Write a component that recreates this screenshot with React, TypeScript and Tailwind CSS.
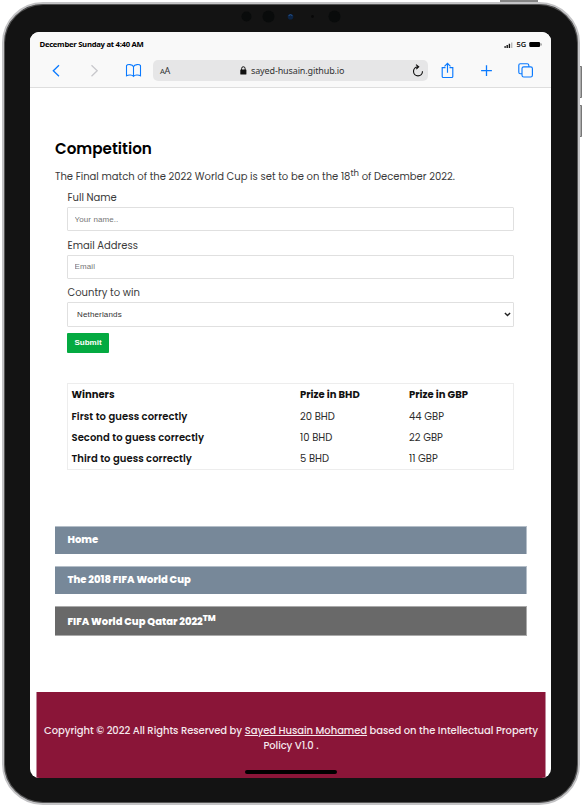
import React from "react";

const poppins = "font-['Poppins','Inter',sans-serif]";
const arial = "font-['Liberation_Sans',Arial,sans-serif]";

function StatusBar() {
  return (
    <div className="flex h-[24px] items-center justify-between pl-[9.5px] pr-[9px] font-['Open_Sans','Noto_Sans',sans-serif] text-black">
      <span className="whitespace-nowrap text-[7.7px] font-bold leading-[24px] tracking-[-0.28px]">December Sunday at 4:40 AM</span>
      <div className="flex h-[24px] items-center">
        <svg width="10" height="6" viewBox="0 0 10 6" className="mt-px">
          <path d="M0.5 4h1.2v2H0.5zM2.5 3h1.4v3H2.5zM4.7 1.8h1.4v4.2H4.7z" fill="#111" />
          <path d="M7 .5h1.4V6H7z" fill="#bbb" />
        </svg>
        <span className="ml-[2px] text-[7.5px] font-semibold leading-[24px] tracking-[-0.1px]">5G</span>
        <svg width="13" height="7" viewBox="0 0 13 7" className="ml-[3px]">
          <rect x="0.3" y="1" width="10.8" height="5" rx="1.2" fill="#000" />
          <path d="M12.1 2.5v2" stroke="#777" />
        </svg>
      </div>
    </div>
  );
}

function Toolbar() {
  return (
    <div className="flex h-[31px] items-start pt-[4px] text-[#0a7aff]">
      <svg width="123" height="21" viewBox="0 0 123 21" fill="none" strokeWidth="1.3">
        <path d="M29 5.3L23.3 10.7L29 16.2" stroke="#0a7aff" />
        <path d="M61.5 5.3L67.2 10.7L61.5 16.2" stroke="#c8c8cc" />
        <path d="M103.5 15.8V6.7C102.5 4.1 97.5 4.1 96.5 5.6V15.8C98.5 14.7 102.4 14.8 103.5 16.3C104.6 14.8 108.5 14.7 110.5 15.8V5.6C109.5 4.1 104.5 4.1 103.5 6.7" stroke="#0a7aff" strokeWidth="1.1" />
      </svg>
      <div className="flex h-[21px] w-[275px] items-center rounded-[5px] bg-[#e6e6e7] pl-[7px] pr-[4px] font-['Noto_Sans',sans-serif] text-[#333]">
        <span className="w-[80px] pt-px text-[9px] leading-[20px] tracking-[-0.2px]"><span className="text-[7.5px]">A</span>A</span>
        <svg width="7" height="9" viewBox="0 0 7 9">
          <rect x=".3" y="3.5" width="6.1" height="5" rx=".6" fill="#111" />
          <path d="M1.6 4V2.5a1.75 1.75 0 0 1 3.5 0V4" stroke="#111" strokeWidth="1" fill="none" />
        </svg>
        <span className="ml-[4px] whitespace-nowrap text-[9px] leading-[20px] tracking-[-0.13px]">sayed-husain.github.io</span>
        <svg width="13" height="14" viewBox="0 0 13 14" fill="none" stroke="#111" strokeWidth="1.15" className="ml-auto">
          <path d="M7 2.8A4.5 4.5 0 1 0 11.5 7.3M5 .6L7.7 2.8L5.3 5.2" />
        </svg>
      </div>
      <svg width="123" height="21" viewBox="0 0 123 21" fill="none" stroke="#0a7aff" strokeWidth="1.15">
        <path d="M17.5 7.6H14.2V16.5Q14.2 17.5 15.2 17.5H23.8Q24.8 17.5 24.8 16.5V7.6H21.5M19.5 12.8V3.6M16.5 6.3L19.5 3.3L22.5 6.3" />
        <path d="M58.5 5.2V16M53.1 10.6H63.9" strokeWidth="1.3" />
        <rect x="94" y="6.8" width="10.4" height="10.2" rx="1.8" />
        <path d="M94 13.7H92.3Q90.8 13.7 90.8 12.2V5.2Q90.8 3.7 92.3 3.7H99.2Q100.8 3.7 100.8 5.2V6.8" />
      </svg>
    </div>
  );
}

const labelStyle = "pl-[0.5px] text-[10px] leading-[20px] text-[#3a3a3a] whitespace-nowrap";
const fieldStyle = "block h-[24px] w-full rounded-[1px] border border-[#e0e0e0] bg-white pl-[6.5px] pr-[6px] text-[8px] tracking-[0.1px] placeholder:text-[#757575]";
const prizes = [
  ["First to guess correctly", "20 BHD", "44 GBP"],
  ["Second to guess correctly", "10 BHD", "22 GBP"],
  ["Third to guess correctly", "5 BHD", "11 GBP"],
];

function CompetitionForm() {
  return (
    <form className="pl-[12px] pr-[13px]" onSubmit={(e) => e.preventDefault()}>
      <label className={`block h-[20px] pt-px ${labelStyle}`}>Full Name</label>
      <input placeholder="Your name.." className={`${arial} ${fieldStyle}`} />
      <label className={`block h-[24px] pt-[5px] ${labelStyle}`}>Email Address</label>
      <input placeholder="Email" className={`${arial} ${fieldStyle} pb-[2px]`} />
      <label className={`block h-[23px] pt-[4px] ${labelStyle}`}>Country to win</label>
      <button type="button" className={`${arial} flex h-[25px] w-full items-center justify-between rounded-[1px] border border-[#e0e0e0] bg-white pl-[9px] pr-[2px] text-[8px] tracking-[0.15px] text-[#333]`}>
        <span>Netherlands</span>
        <svg width="7" height="5" viewBox="0 0 7 5" fill="none" stroke="#222" strokeWidth="1.4"><path d="M.9 1L3.5 3.6L6.1 1" /></svg>
      </button>
      <button className={`${arial} mt-[6px] block h-[20px] w-[42px] rounded-[1px] bg-[#04aa41] text-[8px] font-bold text-white`}>Submit</button>
      <table className="mt-[30px] w-full table-fixed border-collapse border border-[#ededed] text-left text-[10px] leading-[21px] text-[#2c2c2c]">
        <colgroup><col className="w-[229px]" /><col className="w-[109px]" /><col /></colgroup>
        <thead>
          <tr className="h-[22px] font-semibold text-[#111]"><th className="pl-[3.5px]">Winners</th><th className="pl-[3.5px]">Prize in BHD</th><th className="pl-[3.5px]">Prize in GBP</th></tr>
        </thead>
        <tbody>
          {prizes.map(([name, bhd, gbp]) => (
            <tr key={name} className="h-[21px]"><th className="pl-[3.5px] font-semibold tracking-[0.05px] text-[#111]">{name}</th><td className="pl-[3.5px]">{bhd}</td><td className="pl-[3.5px]">{gbp}</td></tr>
          ))}
        </tbody>
      </table>
    </form>
  );
}

export default function App() {
  return (
    <div className="relative h-[806px] w-[582px] overflow-hidden bg-white pl-[2px] pt-[2px]">
      <div className="absolute left-[500px] top-0 h-[3px] w-[38px] bg-[#858585]" />
      <div className="absolute left-[579px] top-[66px] h-[32px] w-[3px] rounded-l-[1px] border border-[#777] bg-[#aaa]" />
      <div className="absolute left-[579px] top-[105px] h-[32px] w-[3px] rounded-l-[1px] border border-[#777] bg-[#aaa]" />
      <div className="relative flex h-[803px] w-[578px] rounded-[41px] border-2 border-[#c3c3c5] bg-[#131313] shadow-[inset_0_0_0_1px_#555]">
        <svg className="absolute left-[230px] top-[5px]" width="120" height="16" viewBox="0 0 120 16">
          <circle cx="12.5" cy="7.5" r="5" fill="#090b0b" /><circle cx="34.5" cy="7.5" r="6" fill="#090b0b" />
          <circle cx="56.5" cy="7.7" r="2.8" fill="#0c2445" /><path d="M54.6 6.6Q56.5 4.8 58.4 6.6" stroke="#28558e" fill="none" /><circle cx="78.5" cy="7.5" r="1.4" fill="#080808" /><circle cx="100.5" cy="7.5" r="6" fill="#090b0b" />
        </svg>
        <div className="relative ml-[26px] mt-[28px] flex h-[746px] w-[521px] flex-col overflow-hidden rounded-[9px] bg-white">
          <header className="h-[56px] shrink-0 border-b border-[#dedede] bg-[#f9f9f9]">
            <StatusBar />
            <Toolbar />
          </header>
          <main className={`${poppins} h-[604px] shrink-0 pl-[25px] pr-[24px]`}>
            <h1 className="mt-[50px] h-[22px] text-[15.2px] font-semibold leading-[22px] text-black">Competition</h1>
            <p className="mt-[7px] h-[20px] whitespace-nowrap text-[10px] leading-[20px] text-[#3a3a3a]">
              The Final match of the 2022 World Cup is set to be on the 18<sup className="top-[-4px] text-[8.5px]">th</sup> of December 2022.
            </p>
            <CompetitionForm />
            <nav className="mt-[56px] flex flex-col gap-[12px] text-[10px] font-extrabold text-white">
              <a className="h-[28px] border-r border-t border-[#b4bec8] bg-[#778899] pl-[12.5px] leading-[26px]">Home</a>
              <a className="h-[28px] border-r border-t border-[#b4bec8] bg-[#778899] pl-[12.5px] leading-[26px] tracking-[-0.03px]">The 2018 FIFA World Cup</a>
              <a className="h-[30px] border-y border-r border-[#aaa] bg-[#696969] pl-[12.5px] leading-[29px] tracking-[-0.03px]">FIFA World Cup Qatar 2022<sup className="top-[-4px] text-[8.5px]">TM</sup></a>
            </nav>
          </main>
          <footer className={`${poppins} ml-[6px] h-[86px] w-[510px] shrink-0 border-x border-[#c0889a] bg-[#8a1538] pt-[31px] text-center text-[10px] font-medium leading-[15px] text-[#f5e8ed]`}>
            <div className="whitespace-nowrap tracking-[-0.05px]">Copyright © 2022 All Rights Reserved by <u>Sayed Husain Mohamed</u> based on the Intellectual Property</div>
            <div className="tracking-[-0.1px]">Policy V1.0 .</div>
          </footer>
          <div className="absolute left-[215px] top-[738px] h-[4px] w-[92px] rounded-full bg-black" />
        </div>
      </div>
    </div>
  );
}
